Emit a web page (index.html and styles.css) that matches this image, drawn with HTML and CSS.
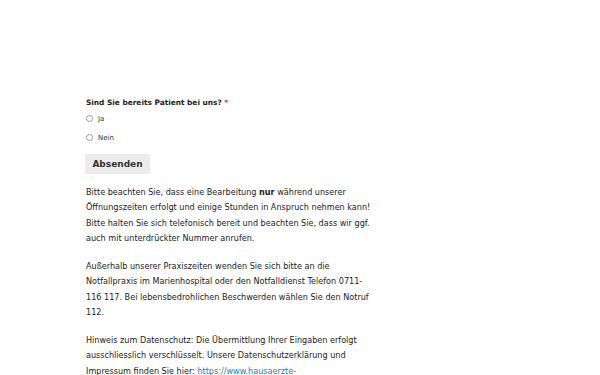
FILE: index.html
```html
<!DOCTYPE html>
<html lang="de">
<head>
<meta charset="utf-8">
<link rel="stylesheet" href="styles.css">
</head>
<body>
<main class="content">
  <form class="form">
    <div class="field-label">Sind Sie bereits Patient bei uns? <span class="req">*</span></div>
    <label class="choice choice-first"><span class="radio"></span>Ja</label>
    <label class="choice"><span class="radio"></span>Nein</label>
    <button type="button" class="submit">Absenden</button>
  </form>
  <p>Bitte beachten Sie, dass eine Bearbeitung <strong>nur</strong> während unserer Öffnungszeiten erfolgt und einige Stunden in Anspruch nehmen kann! Bitte halten Sie sich telefonisch bereit und beachten Sie, dass wir ggf. auch mit unterdrückter Nummer anrufen.</p>
  <p>Außerhalb unserer Praxiszeiten wenden Sie sich bitte an die Notfallpraxis im Marienhospital oder den Notfalldienst Telefon 0711-116 117. Bei lebensbedrohlichen Beschwerden wählen Sie den Notruf 112.</p>
  <p>Hinweis zum Datenschutz: Die Übermittlung Ihrer Eingaben erfolgt ausschliesslich verschlüsselt. Unsere Datenschutzerklärung und Impressum finden Sie hier: <a href="#">https://www.hausaerzte-stuttgart.de/impressum</a></p>
</main>
</body>
</html>
```
FILE: styles.css
```css
html, body {
  margin: 0;
  padding: 0;
  background: #fff;
}
body {
  font-family: "DejaVu Sans", sans-serif;
  color: #222;
}
.content {
  width: 290px;
  margin-left: 86px;
  padding-top: 98px;
}
.form {
  display: flex;
  flex-direction: column;
  align-items: flex-start;
}
.field-label {
  font-size: 7.4px;
  font-weight: bold;
  line-height: 10px;
  color: #222;
}
.req { color: #c33; }
.choice {
  display: flex;
  align-items: center;
  font-size: 7px;
  line-height: 10px;
  color: #333;
  margin-top: 9px;
}
.choice-first { margin-top: 5.5px; }
.radio {
  width: 5px;
  height: 5px;
  border: 0.6px solid #999;
  border-radius: 50%;
  margin-right: 5px;
  background: #fff;
}
.submit {
  margin-top: 11px;
  margin-left: -1px;
  width: 65px;
  height: 20px;
  padding: 0;
  border: none;
  background: #ececec;
  font-family: "DejaVu Sans", sans-serif;
  font-weight: bold;
  font-size: 9px;
  color: #333;
}
p {
  font-size: 8.1px;
  line-height: 15.33px;
  margin: 11.5px 0 0;
  color: #222;
}
p + p { margin-top: 12.7px; }
a { color: #1a7fc0; }
```
